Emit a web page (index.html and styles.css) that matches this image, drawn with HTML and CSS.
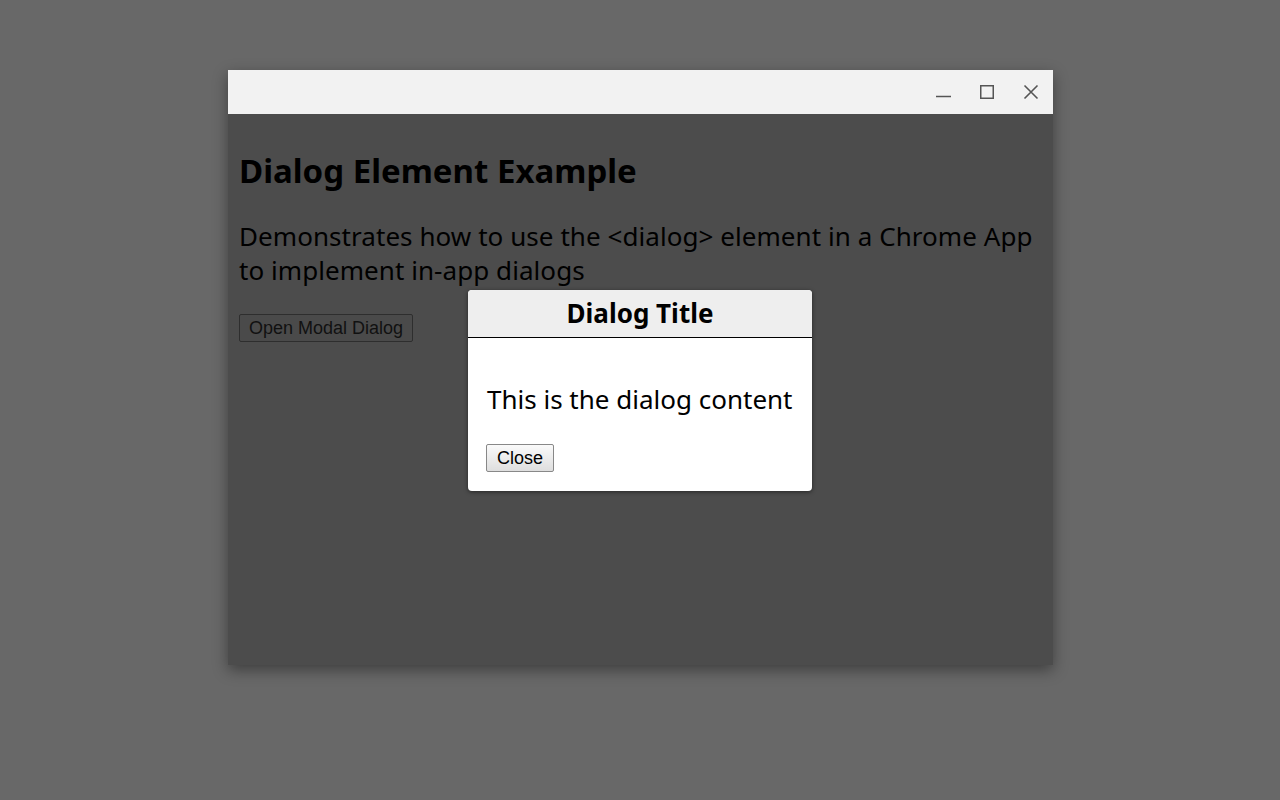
FILE: index.html
```html
<!DOCTYPE html>
<html>
<head>
<meta charset="utf-8">
<link rel="stylesheet" href="styles.css">
</head>
<body>
<div class="desktop">
  <div class="window">
    <div class="titlebar">
      <span class="ctl"><svg width="16" height="16" viewBox="0 0 16 16"><path d="M1 12.5h15" stroke="#555" stroke-width="1.5"/></svg></span>
      <span class="ctl"><svg width="16" height="16" viewBox="0 0 16 16"><rect x="1.75" y="1.75" width="12.5" height="12.5" fill="none" stroke="#555" stroke-width="1.5"/></svg></span>
      <span class="ctl"><svg width="16" height="16" viewBox="0 0 16 16"><path d="M1.5 1.5L14.5 14.5M14.5 1.5L1.5 14.5" stroke="#555" stroke-width="1.6"/></svg></span>
    </div>
    <div class="content">
      <h1 class="h1">Dialog Element Example</h1>
      <p class="desc">Demonstrates how to use the &lt;dialog&gt; element in a Chrome App to implement in-app dialogs</p>
      <button class="btn btn-dim">Open Modal Dialog</button>
      <div class="modal">
        <div class="modal-head">Dialog Title</div>
        <div class="modal-body">
          <p class="modal-text">This is the dialog content</p>
          <button class="btn btn-close">Close</button>
        </div>
      </div>
    </div>
  </div>
</div>
</body>
</html>
```

FILE: styles.css
```css
html, body { margin: 0; padding: 0; }
body { background: #686868; width: 1280px; height: 800px; overflow: hidden; }
.desktop { padding: 70px 0 0 228px; }
.window {
  width: 825px; height: 595px;
  display: flex; flex-direction: column;
  box-shadow: 0 5px 14px rgba(0,0,0,0.4);
}
.titlebar {
  height: 44px; background: #f2f2f2;
  display: flex; justify-content: flex-end; align-items: center;
  padding-right: 14px; gap: 28px;
}
.ctl { width: 16px; height: 16px; display: block; }
.ctl svg { display: block; }
.content {
  flex: 1; background: #4c4c4c; position: relative;
  padding: 0 11px;
  font-family: "Noto Sans", sans-serif; color: #000;
}
.h1 { font-size: 33px; font-weight: 700; margin: 34px 0 0; line-height: 45px; }
.desc { font-size: 26px; line-height: 34px; margin: 26px 0 0; letter-spacing: 0.06px; }
.btn {
  font-family: "Liberation Sans", Arial, sans-serif; font-size: 18px;
  padding: 2px 9px; border: 1px solid #888; border-radius: 2px;
  background: linear-gradient(#fafafa, #dedede); color: #000;
}
.btn-dim {
  margin-top: 27px; background: #4a4a4a; border-color: #2e2e2e; color: #111;
  height: 28px;
}
.modal {
  position: absolute; left: 240px; top: 176px; width: 344px;
  background: #fff; border-radius: 4px; overflow: hidden;
  box-shadow: 0 1px 4px rgba(0,0,0,0.5);
}
.modal-head {
  background: #eeeeee; border-bottom: 1px solid #000;
  text-align: center; font-weight: 700; font-size: 26px;
  height: 47px; line-height: 47px;
}
.modal-body { padding: 0 19px 19px; }
.modal-text { font-size: 26px; margin: 44px 0 27px; line-height: 35px; }
.btn-close { height: 28px; padding: 2px 10px; margin-left: -1px; }
```
